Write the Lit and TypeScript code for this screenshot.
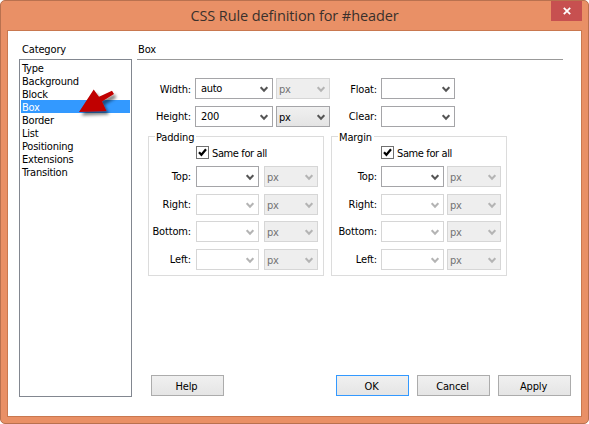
import { LitElement, html, css } from "lit";
import { customElement, property } from "lit/decorators.js";

@customElement("combo-box")
class ComboBox extends LitElement {
  @property() value = "";
  @property({ type: Boolean, reflect: true }) unit = false;
  @property({ type: Boolean, reflect: true }) disabled = false;

  static styles = css`
    :host {
      display: flex;
      box-sizing: border-box;
      flex: none;
      align-items: flex-start;
      justify-content: space-between;
      height: 21px;
      border: 1px solid #a5a5a8;
      background: #fff;
      padding: 3px 4px 0 5px;
      font: 11px/13px "DejaVu Sans Condensed", "DejaVu Sans", sans-serif;
      color: #000;
    }
    :host([unit]) {
      background: linear-gradient(#f0f0f0, #e4e4e4);
      padding-left: 2px;
      padding-top: 4px;
    }
    :host([disabled]) {
      border-color: #d6d6d6;
      color: #737373;
    }
    :host([disabled][unit]) {
      background: #eee;
    }
    .value {
      letter-spacing: -0.3px;
    }
    .chevron {
      display: block;
      width: 8px;
      height: 7px;
      margin-top: 4px;
      fill: none;
      stroke: #555;
      stroke-width: 2;
    }
    :host([unit]) .chevron {
      margin-top: 3px;
    }
    :host([disabled]) .chevron {
      stroke: #b4b4b4;
    }
  `;

  render() {
    return html`<span class="value">${this.value}</span>
      <svg class="chevron" viewBox="0 0 8 7"><path d="M.7 1.2 4 4.7 7.3 1.2" /></svg>`;
  }
}

@customElement("box-sides")
class BoxSides extends LitElement {
  @property() caption = "";

  static styles = css`
    :host {
      display: block;
      box-sizing: border-box;
      height: 140px;
      border: 1px solid #dcdcdc;
      font: 11px/13px "DejaVu Sans Condensed", "DejaVu Sans", sans-serif;
      letter-spacing: -0.15px;
    }
    .caption {
      display: block;
      width: max-content;
      margin: -6px 0 0 6px;
      padding: 0 2px 0 1px;
      background: #fff;
    }
    .same {
      display: flex;
      gap: 3px;
      margin: 2px 0 7px calc(var(--name-width) + var(--name-gap));
      height: 13px;
      letter-spacing: -0.38px;
    }
    .tick {
      box-sizing: border-box;
      width: 13px;
      height: 13px;
      border: 1px solid #707070;
      background: #fff;
    }
    .tick svg {
      display: block;
      fill: none;
      stroke: #000;
      stroke-width: 2.2;
    }
    .same-text {
      padding-top: 1px;
    }
    .row {
      display: flex;
      height: 27.67px;
    }
    .name {
      display: flex;
      justify-content: flex-end;
      width: var(--name-width);
      margin-right: var(--name-gap);
      padding-top: 4px;
      white-space: nowrap;
    }
    .field {
      width: 63px;
      margin-right: var(--unit-gap);
    }
    .measure {
      width: 54px;
    }
  `;

  render() {
    return html`
      <span class="caption">${this.caption}</span>
      <div class="same">
        <span class="tick"><svg width="11" height="11" viewBox="0 0 11 11"><path d="M2 5.2 4.4 7.8 9 2.2" /></svg></span>
        <span class="same-text">Same for all</span>
      </div>
      ${["Top:", "Right:", "Bottom:", "Left:"].map(
        (name, i) => html`<div class="row">
          <span class="name">${name}</span>
          <combo-box class="field" ?disabled=${i > 0}></combo-box>
          <combo-box class="measure" unit disabled value="px"></combo-box>
        </div>`
      )}
    `;
  }
}

@customElement("app-root")
class AppRoot extends LitElement {
  static styles = css`
    :host {
      display: block;
      width: 589px;
      height: 424px;
      background: #fff;
      color: #000;
      font: 11px/13px "DejaVu Sans Condensed", "DejaVu Sans", sans-serif;
      letter-spacing: -0.15px;
    }
    .window {
      box-sizing: border-box;
      height: 424px;
      padding: 0 6px 6px;
      background: #e99066;
      border: 1px solid #b9714f;
      border-radius: 5px;
    }
    .titlebar {
      display: grid;
      grid-template-columns: 31px 1fr 31px;
      height: 29px;
    }
    .title {
      grid-column: 2;
      text-align: center;
      padding-top: 5px;
      font: 14.5px/20px "Open Sans", "Noto Sans", sans-serif;
      letter-spacing: -0.1px;
      color: #3a302c;
      white-space: nowrap;
    }
    .close {
      height: 20px;
      background: #c75050;
      display: grid;
      place-items: center;
    }
    .client {
      box-sizing: border-box;
      height: 387px;
      border: 1px solid #c9784f;
      background: #fff;
      display: grid;
      grid-template-columns: 113px 434px;
      column-gap: 5px;
      padding: 12px 0 0 11px;
    }
    .heading {
      height: 16px;
      padding-left: 3px;
    }
    .list {
      position: relative;
      box-sizing: border-box;
      height: 338px;
      border: 1px solid #828790;
      padding: 1px;
    }
    .item {
      height: 13px;
      padding-left: 1px;
      line-height: 15px;
      letter-spacing: -0.22px;
    }
    .item.selected {
      background: #3399ff;
      color: #fff;
    }
    .pointer {
      position: absolute;
      left: 54px;
      top: 24px;
    }
    .main .heading {
      padding-left: 1px;
      border-bottom: 1px solid #999;
      width: 425px;
      margin-bottom: 18px;
    }
    .top-row {
      display: flex;
      height: 28px;
    }
    .label {
      display: flex;
      justify-content: flex-end;
      box-sizing: border-box;
      width: 54px;
      margin-right: 4px;
      padding-top: 5px;
    }
    .label.second {
      width: 47px;
    }
    .height .label {
      padding-top: 4px;
    }
    .value {
      width: 78px;
      margin-right: 3px;
    }
    .unit {
      width: 54px;
    }
    .side {
      width: 74px;
    }
    .groups {
      display: grid;
      grid-template-columns: 176px 176px;
      gap: 7px;
      margin: 2px 0 0 11px;
    }
    .padding {
      --name-width: 42px;
      --name-gap: 5px;
      --unit-gap: 5px;
    }
    .margin {
      --name-width: 45px;
      --name-gap: 4px;
      --unit-gap: 3px;
    }
    .actions {
      display: flex;
      gap: 8px;
      margin: 99px 0 0 14px;
    }
    .button {
      box-sizing: border-box;
      width: 73px;
      height: 21px;
      padding: 4px 2px 0 0;
      border: 1px solid #acacac;
      background: linear-gradient(#f0f0f0, #e5e5e5);
      text-align: center;
    }
    .button.help {
      margin-right: 104px;
    }
    .button.default {
      border-color: #3399ff;
    }
  `;

  render() {
    const categories = ["Type", "Background", "Block", "Box", "Border", "List", "Positioning", "Extensions", "Transition"];
    return html`
      <div class="window">
        <div class="titlebar">
          <div class="title">CSS Rule definition for #header</div>
          <div class="close">
            <svg width="8" height="8" viewBox="0 0 8 8" stroke="#fff" stroke-width="1.8"><path d="M.8.8 7.2 7.2M7.2.8.8 7.2" /></svg>
          </div>
        </div>
        <div class="client">
          <div>
            <div class="heading">Category</div>
            <div class="list">
              ${categories.map((c) => html`<div class="item ${c === "Box" ? "selected" : ""}">${c}</div>`)}
              <svg class="pointer" width="50" height="40" viewBox="74 84 50 40">
                <defs><filter id="s" x="-30%" y="-30%" width="170%" height="170%">
                  <feDropShadow dx="2.5" dy="3.5" stdDeviation="1.5" flood-color="#000" flood-opacity=".5" />
                </filter></defs>
                <path d="M79 112 93.7 89.5 99 96.8 112 90.7 114 94 102 101.5 106.5 111Z" fill="#c00000" filter="url(#s)" />
              </svg>
            </div>
          </div>
          <div class="main">
            <div class="heading">Box</div>
            <div class="top-row">
              <span class="label">Width:</span>
              <combo-box class="value" value="auto"></combo-box>
              <combo-box class="unit" unit disabled value="px"></combo-box>
              <span class="label second">Float:</span>
              <combo-box class="side"></combo-box>
            </div>
            <div class="top-row height">
              <span class="label">Height:</span>
              <combo-box class="value" value="200"></combo-box>
              <combo-box class="unit" unit value="px"></combo-box>
              <span class="label second">Clear:</span>
              <combo-box class="side"></combo-box>
            </div>
            <div class="groups">
              <box-sides class="padding" caption="Padding"></box-sides>
              <box-sides class="margin" caption="Margin"></box-sides>
            </div>
            <div class="actions">
              <div class="button help">Help</div>
              <div class="button default">OK</div>
              <div class="button">Cancel</div>
              <div class="button">Apply</div>
            </div>
          </div>
        </div>
      </div>
    `;
  }
}
